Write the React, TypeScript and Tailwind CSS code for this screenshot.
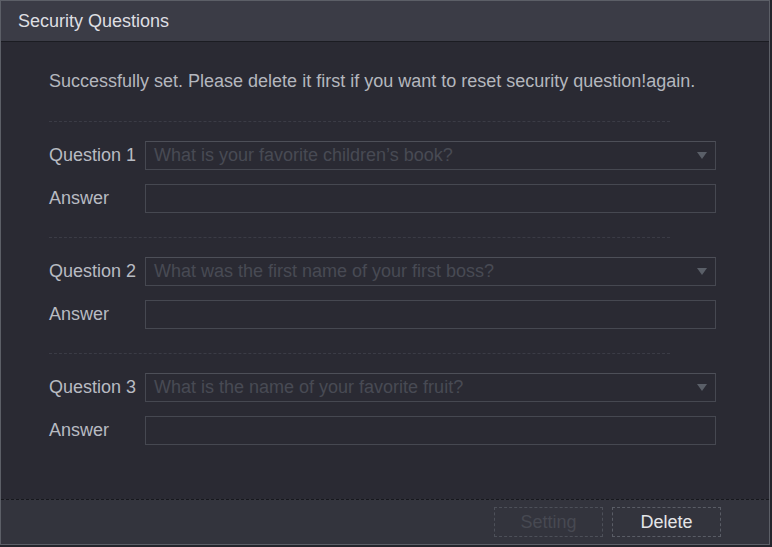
import React from "react";

const questions = [
  { label: "Question 1", text: "What is your favorite children’s book?" },
  { label: "Question 2", text: "What was the first name of your first boss?" },
  { label: "Question 3", text: "What is the name of your favorite fruit?" },
];

function Arrow() {
  return (
    <svg width="10" height="7" viewBox="0 0 10 7" className="shrink-0">
      <path d="M0 0H10L5 7Z" fill="#5a5f68" />
    </svg>
  );
}

export default function App() {
  return (
    <div
      className="w-[772px] h-[547px] bg-[#24252c]"
      style={{ fontFamily: '"Liberation Sans", Arial, sans-serif' }}
    >
      <div className="w-[770px] h-[545px] flex flex-col border border-[#5c5f67]">
        <div className="h-[41px] shrink-0 flex items-center pl-[17px] bg-[#3b3c46] border-b border-[#1b1c22] text-[18px] text-[#dedfe2]">
          Security Questions
        </div>

        <div className="flex-1 bg-[#2a2a33] pl-[48px] pr-[53px]">
          <p className="mt-[27px] h-[24px] leading-[24px] text-[18px] text-[#b4b7be] whitespace-nowrap">
            Successfully set. Please delete it first if you want to reset security question!again.
          </p>

          <div className="mt-[28px] flex flex-col">
            {questions.map((q) => (
              <div key={q.label} className="flex flex-col">
                <div className="w-[621px] border-t border-dashed border-[#3b3c46]" />
                <div className="mt-[19px] flex items-center h-[29px]">
                  <span className="w-[96px] shrink-0 text-[18px] text-[#b8bbc2]">{q.label}</span>
                  <div className="flex-1 h-full flex items-center justify-between pl-[8px] pr-[8px] border border-[#464851] border-t-[#4d4f58] bg-[#2a2a33]">
                    <span className="text-[18px] text-[#484a54] whitespace-nowrap">{q.text}</span>
                    <Arrow />
                  </div>
                </div>
                <div className="mt-[14px] mb-[24px] flex items-center h-[29px]">
                  <span className="w-[96px] shrink-0 text-[18px] text-[#b8bbc2]">Answer</span>
                  <div className="flex-1 h-full border border-[#464851] bg-[#2a2a33]" />
                </div>
              </div>
            ))}
          </div>
        </div>

        <div className="h-[45px] shrink-0 flex items-center justify-end gap-[9px] pr-[48px] bg-[#33343d] border-t border-dashed border-[#17181d]">
          <button className="w-[109px] h-[30px] border border-dashed border-[#4d5059] text-[18px] text-[#474952]">
            Setting
          </button>
          <button className="w-[109px] h-[30px] border border-dashed border-[#5a5d66] text-[18px] text-[#e4e5e8]">
            Delete
          </button>
        </div>
      </div>
    </div>
  );
}
